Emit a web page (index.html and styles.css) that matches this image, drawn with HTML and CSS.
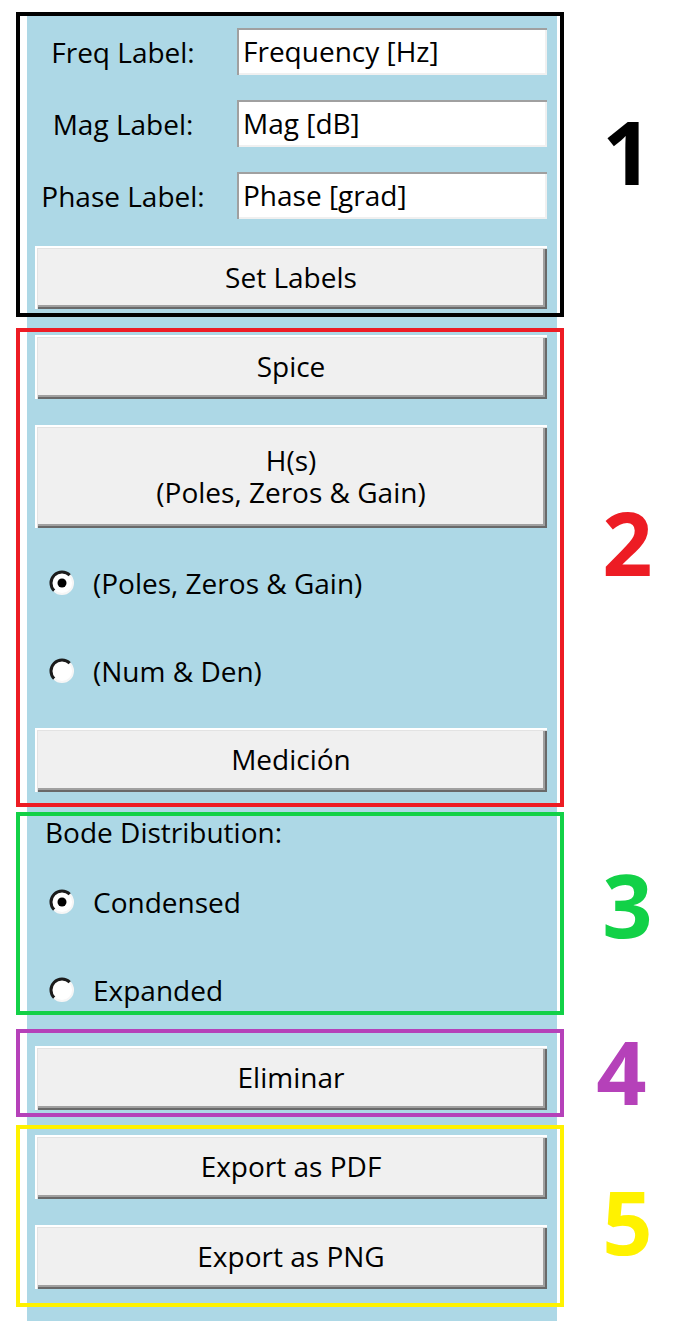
FILE: index.html
```html
<!DOCTYPE html>
<html lang="en">
<head>
  <meta charset="UTF-8" />
  <meta name="viewport" content="width=device-width, initial-scale=1.0"/>
  <title>Bode Plotter - Panel</title>
  <link rel="stylesheet" href="styles.css">
</head>
<body>
  <svg class="sprites" xmlns="http://www.w3.org/2000/svg">
    <symbol id="radio-off" viewBox="0 0 28 28">
      <circle cx="14" cy="14" r="11" fill="#fff"/>
      <path d="M6.2 21.8 A11 11 0 0 1 21.8 6.2" fill="none" stroke="#1b1b1b" stroke-width="3"/>
      <path d="M21.8 6.2 A11 11 0 0 1 6.2 21.8" fill="none" stroke="#f6f6f6" stroke-width="2"/>
    </symbol>
    <symbol id="radio-on" viewBox="0 0 28 28">
      <circle cx="14" cy="14" r="11" fill="#fff"/>
      <path d="M6.2 21.8 A11 11 0 0 1 21.8 6.2" fill="none" stroke="#1b1b1b" stroke-width="3"/>
      <path d="M21.8 6.2 A11 11 0 0 1 6.2 21.8" fill="none" stroke="#f6f6f6" stroke-width="2"/>
      <circle cx="14" cy="14" r="4.5" fill="#000"/>
    </symbol>
  </svg>

  <main class="page">
    <div class="group">
      <section class="frame frame-black labels">
        <div class="field-row">
          <span class="field-label">Freq Label:</span>
          <input class="field" type="text" value="Frequency [Hz]">
        </div>
        <div class="field-row">
          <span class="field-label">Mag Label:</span>
          <input class="field" type="text" value="Mag [dB]">
        </div>
        <div class="field-row">
          <span class="field-label">Phase Label:</span>
          <input class="field" type="text" value="Phase [grad]">
        </div>
        <button class="btn btn-set">Set Labels</button>
      </section>
      <div class="num num-1">1</div>
    </div>

    <div class="group group-red">
      <section class="frame frame-red sources">
        <button class="btn">Spice</button>
        <button class="btn btn-tall">
          <span class="btn-line">H(s)</span>
          <span class="btn-line">(Poles, Zeros &amp; Gain)</span>
        </button>
        <label class="radio radio-first">
          <svg class="radio-icon"><use href="#radio-on"/></svg>
          <span>(Poles, Zeros &amp; Gain)</span>
        </label>
        <label class="radio">
          <svg class="radio-icon"><use href="#radio-off"/></svg>
          <span>(Num &amp; Den)</span>
        </label>
        <button class="btn btn-last">Medición</button>
      </section>
      <div class="num num-2">2</div>
    </div>

    <div class="group group-green">
      <section class="frame frame-green distribution">
        <div class="caption">Bode Distribution:</div>
        <label class="radio radio-first">
          <svg class="radio-icon"><use href="#radio-on"/></svg>
          <span>Condensed</span>
        </label>
        <label class="radio">
          <svg class="radio-icon"><use href="#radio-off"/></svg>
          <span>Expanded</span>
        </label>
      </section>
      <div class="num num-3">3</div>
    </div>

    <div class="group group-purple">
      <section class="frame frame-purple remove">
        <button class="btn">Eliminar</button>
      </section>
      <div class="num num-4">4</div>
    </div>

    <div class="group group-yellow">
      <section class="frame frame-yellow export">
        <button class="btn">Export as PDF</button>
        <button class="btn">Export as PNG</button>
      </section>
      <div class="num num-5">5</div>
    </div>
  </main>
</body>
</html>
```

FILE: styles.css
```css
* {
  margin: 0;
  padding: 0;
  box-sizing: border-box;
}

body {
  min-height: 1321px;
  font-family: 'Open Sans', sans-serif;
  color: #000;
  /* the tk panel runs behind every group, down to the bottom edge */
  background: #fff linear-gradient(#add8e6, #add8e6) no-repeat 27px 12px / 530px calc(100% - 12px);
}

.sprites {
  display: none;
}

.page {
  display: flex;
  flex-direction: column;
  padding: 12px 0 0 16px;
}

.group {
  display: grid;
  grid-template-columns: 548px 1fr;
  align-items: start;
}

.group-red { margin-top: 11px; }
.group-green { margin-top: 5px; }
.group-purple { margin-top: 14px; }
.group-yellow { margin-top: 8px; }

/* annotation frames */
.frame {
  display: flex;
  flex-direction: column;
  border: 4px solid #000;
  padding-left: 15px;
  padding-right: 13px;
}

.frame-black { border-color: #000; }
.frame-red { border-color: #ed1c24; }
.frame-green { border-color: #12d147; }
.frame-purple { border-color: #b541b9; }
.frame-yellow { border-color: #fff200; }

.num {
  font: 700 88px/1 'Open Sans', sans-serif;
  text-align: center;
  padding-left: 16px;
}

.num-1 { color: #000; margin-top: 95px; }
.num-2 { color: #ed1c24; margin-top: 170px; }
.num-3 { color: #12d147; margin-top: 48px; }
.num-4 { color: #b541b9; margin-top: -2px; padding-left: 4px; }
.num-5 { color: #fff200; margin-top: 52px; }

/* 1 - labels */
.labels {
  padding-top: 12px;
  padding-bottom: 4px;
  gap: 25px;
}

.field-row {
  display: grid;
  grid-template-columns: 176px 310px;
  column-gap: 26px;
  align-items: center;
  height: 47px;
}

.field-label {
  text-align: center;
  font-size: 28px;
}

.field {
  height: 47px;
  border: 0;
  outline: none;
  background: #fff;
  padding: 0 6px 2px;
  font: 28px 'Open Sans', sans-serif;
  color: #000;
  box-shadow: inset 2px 2px 0 #a0a0a0, inset -2px -2px 0 #f0f0f0;
}

/* windows style raised button */
.btn {
  display: block;
  width: 100%;
  height: 64px;
  border: 0;
  background: #f0f0f0;
  font: 28px/32px 'Open Sans', sans-serif;
  color: #000;
  padding-bottom: 2px;
  cursor: pointer;
  box-shadow: inset 2px 2px 0 #fff,
              inset 3px 3px 0 #e3e3e3,
              inset -2px -2px 0 #696969,
              inset -4px -4px 0 #a0a0a0;
}

.btn:active {
  box-shadow: inset 2px 2px 0 #696969, inset -2px -2px 0 #fff;
}

.btn-set {
  margin-top: 2px;
  height: 63px;
}

/* 2 - sources */
.sources {
  padding-top: 3px;
  padding-bottom: 11px;
}

.btn-tall {
  display: flex;
  flex-direction: column;
  justify-content: center;
  align-items: center;
  height: 103px;
  margin-top: 26px;
  gap: 0;
}

.btn-line {
  display: block;
  height: 32px;
  line-height: 32px;
}

.radio {
  display: flex;
  align-items: center;
  gap: 17px;
  height: 40px;
  padding-left: 13px;
  margin-top: 48px;
  font-size: 28px;
  cursor: pointer;
}

.radio-icon {
  width: 28px;
  height: 28px;
  flex: none;
}

.sources .radio-first { margin-top: 35px; }

.btn-last { margin-top: 37px; }

/* 3 - bode distribution */
.distribution {
  padding-bottom: 1px;
}

.caption {
  height: 32px;
  line-height: 32px;
  padding-left: 10px;
  font-size: 28px;
}

.distribution .radio-first { margin-top: 34px; }

/* 4 - remove */
.remove {
  padding-top: 13px;
  padding-bottom: 3px;
}

/* 5 - export */
.export {
  padding-top: 6px;
  padding-bottom: 14px;
  gap: 26px;
}
```
